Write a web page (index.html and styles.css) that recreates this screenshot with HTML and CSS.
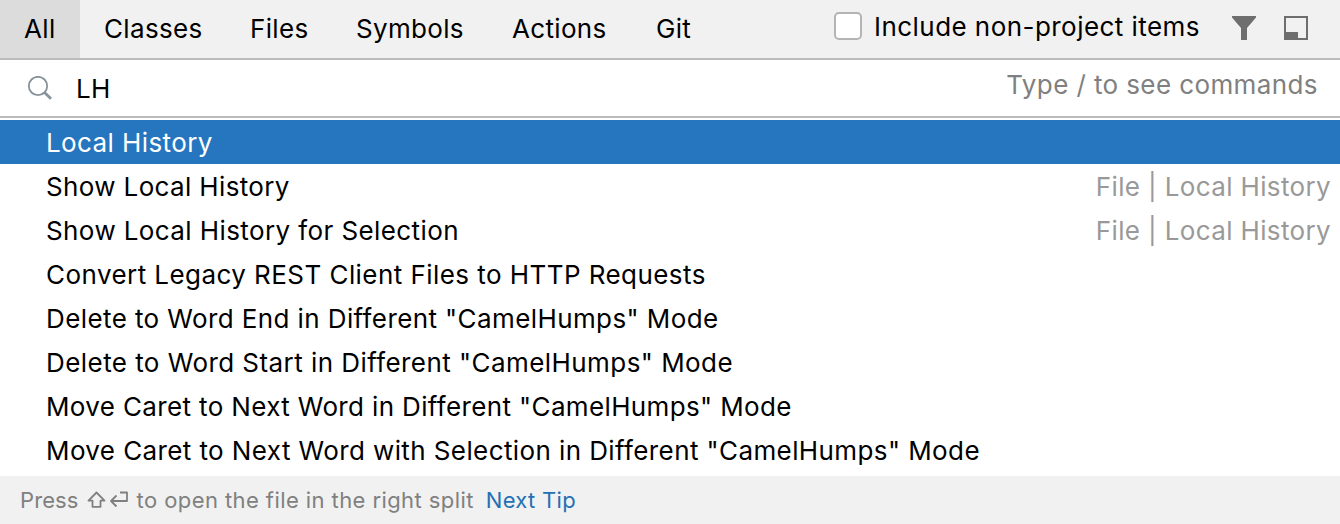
FILE: index.html
```html
<!DOCTYPE html>
<html lang="en">
<head>
<meta charset="utf-8">
<title>Search Everywhere</title>
<link rel="stylesheet" href="styles.css">
</head>
<body>
<div class="popup">
  <header class="tabs">
    <nav class="tab-list">
      <span class="tab active t-all">All</span>
      <span class="tab t-classes">Classes</span>
      <span class="tab t-files">Files</span>
      <span class="tab t-symbols">Symbols</span>
      <span class="tab t-actions">Actions</span>
      <span class="tab t-git">Git</span>
    </nav>
    <div class="tools">
      <span class="checkbox"></span>
      <span class="include">Include non-project items</span>
      <svg class="filter" width="24" height="24" viewBox="0 0 24 24"><path d="M0 0H24V1.5L15 12V24H9V12L0 1.5Z" fill="#6e6e6e"/></svg>
      <svg class="window" width="24" height="24" viewBox="0 0 24 24"><path d="M1 1H23V23H1Z" fill="none" stroke="#6e6e6e" stroke-width="2"/><path d="M1 16H14V23H1Z" fill="#6e6e6e"/></svg>
    </div>
  </header>
  <div class="search">
    <svg class="magnifier" width="26" height="26" viewBox="0 0 26 26"><circle cx="11" cy="10" r="9.2" fill="none" stroke="#87939a" stroke-width="1.8"/><path d="M17 16L24 22.8" stroke="#87939a" stroke-width="2.8"/></svg>
    <span class="query">LH</span>
    <span class="hint">Type / to see commands</span>
  </div>
  <ul class="results">
    <li class="row selected"><span>Local History</span></li>
    <li class="row snug"><span>Show Local History</span><span class="path">File | Local History</span></li>
    <li class="row"><span>Show Local History for Selection</span><span class="path">File | Local History</span></li>
    <li class="row wide"><span>Convert Legacy REST Client Files to HTTP Requests</span></li>
    <li class="row"><span>Delete to Word End in Different "CamelHumps" Mode</span></li>
    <li class="row wide"><span>Delete to Word Start in Different "CamelHumps" Mode</span></li>
    <li class="row snug"><span>Move Caret to Next Word in Different "CamelHumps" Mode</span></li>
    <li class="row"><span>Move Caret to Next Word with Selection in Different "CamelHumps" Mode</span></li>
  </ul>
  <footer class="footer">
    <span class="press">Press</span>
    <svg class="keys" width="42" height="18" viewBox="0 0 42 18"><path d="M9.5 1.5L17.5 9.7H13.5V15.8H5.5V9.7H1.5Z" fill="none" stroke="#808080" stroke-width="1.8" stroke-linejoin="round"/><path d="M33 1.5H40V10H24M29.5 4.5L24 10L29.5 15.5" fill="none" stroke="#808080" stroke-width="1.8" stroke-linejoin="round"/></svg>
    <span class="tip">to open the file in the right split</span>
    <span class="next">Next Tip</span>
  </footer>
</div>
</body>
</html>
```
FILE: styles.css
```css
* { box-sizing: border-box; }
body { margin: 0; background: #fff; }
.popup { width: 1340px; height: 524px; font: 26px/44px Inter, sans-serif; letter-spacing: 0.4px; color: #000; white-space: nowrap; overflow: hidden; }
.tabs { display: flex; justify-content: space-between; height: 60px; background: #f1f1f1; border-bottom: 2px solid #bbb; }
.tab-list { display: flex; letter-spacing: 0.33px; }
.tab { padding: 7px 0 0 24px; height: 58px; }
.t-all { width: 80px; }
.t-classes { width: 146px; }
.t-files { width: 106px; }
.t-symbols { width: 156px; }
.t-actions { width: 144px; }
.active { background: #dcdcdc; }
.tools { display: flex; padding-right: 32px; }
.checkbox { width: 28px; height: 28px; margin: 12px 12px 0 0; border: 2px solid #b4b4b4; border-radius: 5px; background: #fff; }
.include { margin-top: 5px; letter-spacing: 0.45px; }
.filter { margin: 16px 0 0 32px; }
.window { margin: 16px 0 0 28px; }
.search { display: flex; height: 58px; border-bottom: 2px solid #bbb; }
.magnifier { margin: 16px 0 0 27px; }
.query { margin: 7px 0 0 23px; }
.hint { margin: 3px 22px 0 auto; color: #808080; }
.results { list-style: none; margin: 0; padding: 2px 0 4px; }
.row { display: flex; justify-content: space-between; height: 44px; padding: 1px 9px 0 46px; }
.wide { letter-spacing: 0.44px; }
.snug { letter-spacing: 0.36px; }
.selected { background: #2675bf; color: #fff; }
.path { color: #999; letter-spacing: 0.36px; }
.footer { display: flex; height: 48px; padding-left: 20px; background: #f1f1f1; color: #808080; font-size: 22px; line-height: 48px; }
.press { letter-spacing: 0.1px; }
.keys { margin: 15px 0 0 8px; }
.tip { margin-left: 8px; letter-spacing: 0.42px; }
.next { margin-left: 12px; color: #2470b3; letter-spacing: 0.3px; }
```
